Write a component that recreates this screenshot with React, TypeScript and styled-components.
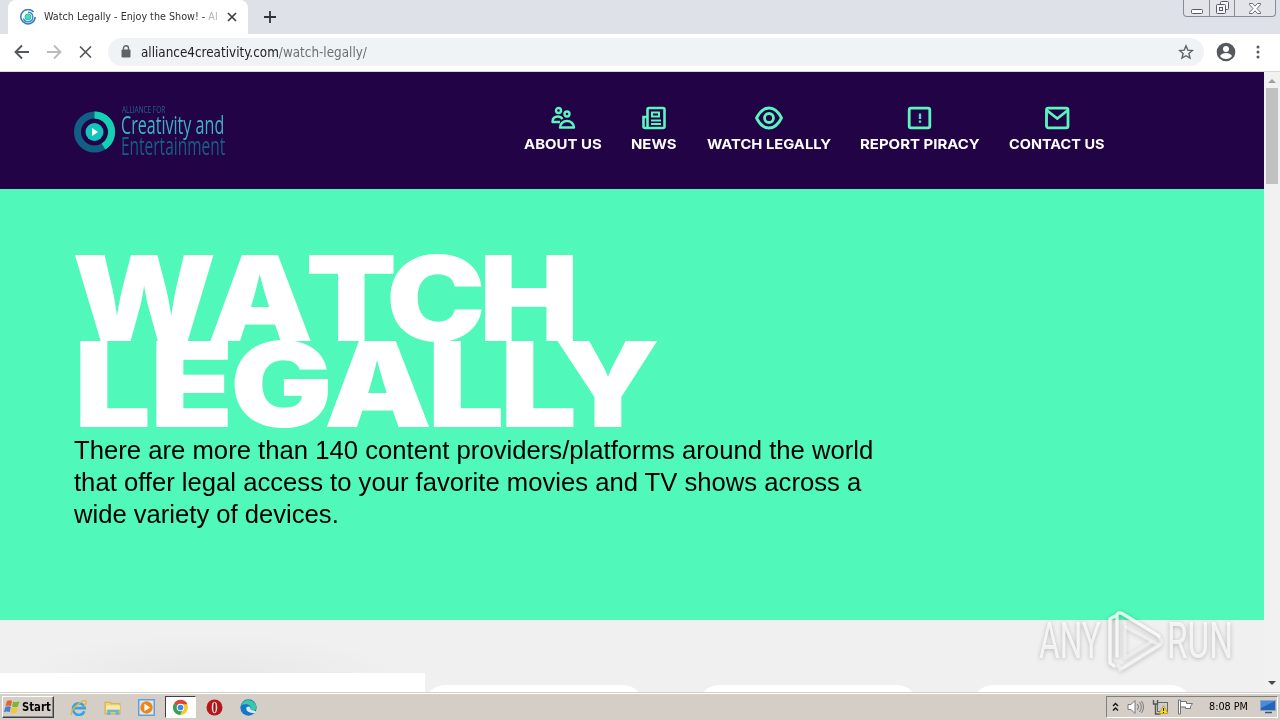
import React, { ReactNode, useLayoutEffect, useRef, useState } from "react";
import styled, { createGlobalStyle } from "styled-components";

const GlobalStyle = createGlobalStyle`
  * {
    box-sizing: border-box;
  }
  body {
    margin: 0;
    overflow: hidden;
    background: #fff;
    font-family: "Liberation Sans", sans-serif;
  }
  svg {
    display: block;
    flex: none;
  }
`;

interface FitProps {
  width: number;
  children: ReactNode;
}

// squeezes or stretches one line of text to a fixed width
const FitText = ({ width, children }: FitProps) => {
  const ref = useRef<HTMLSpanElement>(null);
  const [scale, setScale] = useState(1);
  useLayoutEffect(() => {
    if (ref.current) setScale(width / ref.current.offsetWidth);
  }, [width]);
  return (
    <FitBox $width={width}>
      <FitInner ref={ref} style={{ transform: `scaleX(${scale})` }}>
        {children}
      </FitInner>
    </FitBox>
  );
};

const navItems = [
  { label: "ABOUT US", width: 78, icon: "people" },
  { label: "NEWS", width: 46, icon: "news" },
  { label: "WATCH LEGALLY", width: 124, icon: "eye" },
  { label: "REPORT PIRACY", width: 120, icon: "report" },
  { label: "CONTACT US", width: 96, icon: "mail" },
];

const NavIcon = ({ name }: { name: string }) => (
  <svg width="28" height="24" viewBox="0 0 28 24" fill="none" stroke="#5cf5c0" strokeWidth="2.800">
    {name === "people" && (
      <g strokeWidth="2.400">
        <circle cx="9.500" cy="4.500" r="2.500" />
        <circle cx="18" cy="8" r="2.500" />
        <path d="M11 16H3.500C3.500 12 6 10.500 9 10.500c2 0 3.500 1 4.500 2.500M11 21.500h14c0-4-3.500-6.500-7-6.500S11 17.500 11 21.500z" strokeLinejoin="round" />
      </g>
    )}
    {name === "news" && (
      <g strokeWidth="2.600">
        <path d="M7.500 22V3.500Q7.500 2 9 2h14q1.500 0 1.500 1.500v17Q24.500 22 23 22H5q-1.500 0-1.500-1.500V11h4" />
        <path d="M12 6.500h7v4h-7zM11 14.500h10M11 18h10" strokeWidth="2" />
      </g>
    )}
    {name === "eye" && (
      <>
        <path d="M1.500 12C5 5 9 2 14 2s9 3 12.500 10C23 19 19 22 14 22S5 19 1.500 12z" strokeLinejoin="round" />
        <circle cx="14" cy="12" r="4.500" />
      </>
    )}
    {name === "report" && (
      <>
        <rect x="3.200" y="2.200" width="20.600" height="19.600" rx="1.800" />
        <path d="M14 7.500v5.500M14 14.500v2.200" stroke="#55d9d0" strokeWidth="2.400" />
      </>
    )}
    {name === "mail" && (
      <>
        <rect x="3.500" y="2.200" width="21.500" height="19.600" rx="1.800" />
        <path d="M4 4.500l10.300 8L24.500 4.500" />
      </>
    )}
  </svg>
);

const BrandMark = () => (
  <svg width="42" height="42" viewBox="0 0 42 42">
    <circle cx="20.500" cy="21" r="17" fill="none" stroke="#125f86" strokeWidth="7" />
    <path d="M20.500 4a17 17 0 0 1 9 31.500" fill="none" stroke="#14d0b4" strokeWidth="7" />
    <circle cx="20.500" cy="21" r="9" fill="#12c4bd" />
    <path d="M18 17l6 4-6 4z" fill="#fff" />
  </svg>
);

const Favicon = () => (
  <svg width="16" height="16" viewBox="0 0 16 16" fill="none">
    <path d="M13.500 3A7.200 7.200 0 1 0 15.200 8" stroke="#3576b8" strokeWidth="1.500" />
    <path d="M8 3.200A4.800 4.800 0 1 1 3.400 9.500" stroke="#358fc4" strokeWidth="1.400" />
    <circle cx="8" cy="8" r="3" fill="#48dcbb" stroke="#2ab8bd" />
  </svg>
);

const WatermarkMark = () => (
  <svg width="62" height="66" viewBox="0 0 62 66" fill="none" stroke="#fff" strokeOpacity=".8" strokeWidth="3.400" strokeLinejoin="round" strokeLinecap="round">
    <path d="M11 58L7 55V11l5-3" />
    <path d="M14 48V8Q14 3 20 6l36 22" />
    <path d="M23 19l33 18-35 22q-4 2-6-1" strokeOpacity=".5" />
    <path d="M17 62l39-24q5-4 0-9M22 15v35l26-16" strokeOpacity=".45" />
  </svg>
);

const StartFlag = () => (
  <svg width="17" height="16" viewBox="0 0 17 16">
    <path d="M3 2q3-1.500 5 0L7 7Q4.500 5.800 1.500 7z" fill="#e6622a" />
    <path d="M9 2.500q3 1.300 6.500-.2L14 7.500q-3 1.300-6 0z" fill="#78b837" />
    <path d="M1.300 8q3-1.300 5.500 0l-1 5Q3 12 0 13z" fill="#3f82d6" />
    <path d="M7.800 8.500q3 1.300 6 0l-1.200 5q-3 1.300-6 0z" fill="#f5c62e" />
  </svg>
);

const taskIcons: Record<string, ReactNode> = {
  ie: (
    <>
      <path d="M13.500 11.500A5.500 5.500 0 1 1 13.800 8.600H4" fill="none" stroke="#36a4df" strokeWidth="2.500" />
      <path d="M1.500 15C-.5 11 10 1 14.500 1.500 17 2 14 6 13 7" fill="none" stroke="#e2b63d" strokeWidth="1.300" />
    </>
  ),
  folder: (
    <>
      <path d="M1 3h5l1 1.500h8V14H1z" fill="#f0d477" stroke="#cfb04e" />
      <path d="M2 6h13v4H2z" fill="#f9eaa8" />
      <path d="M3 15v-5h11v5h-3v-2.500H6V15z" fill="#67b7dc" />
    </>
  ),
  media: (
    <>
      <rect x=".7" y=".7" width="14.600" height="14.600" fill="#d8e9f7" stroke="#5c9bd8" strokeWidth="1.300" />
      <circle cx="8" cy="8" r="5.800" fill="#f28412" />
      <path d="M6 4.500L11.500 8 6 11.500z" fill="#fff" />
    </>
  ),
  chrome: (
    <>
      <circle cx="8" cy="8" r="7" fill="#f7c72d" />
      <path d="M8 8L2 4.300A7 7 0 0 1 14.500 5H8z" fill="#e04434" />
      <path d="M8 8L2 4.300A7 7 0 0 0 7.500 15l3-5.500z" fill="#31a352" />
      <circle cx="8" cy="8" r="3.600" fill="#fff" />
      <circle cx="8" cy="8" r="2.700" fill="#4386ec" />
    </>
  ),
  opera: (
    <>
      <circle cx="8" cy="8" r="7.500" fill="#b5161b" />
      <ellipse cx="8" cy="8" rx="2.600" ry="5.500" fill="#f0dcd6" />
      <ellipse cx="8" cy="8" rx="1.100" ry="4.600" fill="#9b1013" />
    </>
  ),
  edge: (
    <>
      <circle cx="8" cy="8" r="7.700" fill="#1378c9" />
      <path d="M.8 6A7.700 7.700 0 0 1 15.700 8.500Q15 11 11.500 10.500 9.500 10 10.300 8.500 10 5.500 6.500 5 3 4.800.8 6z" fill="#3bc8a2" />
      <path d="M6 8q-1 5 7.500 5.500Q17 11 11.500 10.700 9.300 10 10 8.500 8.500 6 6 8z" fill="#dce9ec" />
    </>
  ),
};

const App = () => {
  return (
    <Screen>
      <GlobalStyle />
      <TabStrip>
        <Tab>
          <Favicon />
          <TabTitle>
            <FitText width={174}>
              Watch Legally - Enjoy the Show! - <Faded>Al</Faded>
            </FitText>
          </TabTitle>
          <svg width="10" height="10" viewBox="0 0 10 10" stroke="#3c4043" strokeWidth="1.700">
            <path d="M1 1l8 8M9 1L1 9" />
          </svg>
        </Tab>
        <NewTab>
          <svg width="12" height="12" viewBox="0 0 12 12" stroke="#303338" strokeWidth="1.800">
            <path d="M6 0v12M0 6h12" />
          </svg>
        </NewTab>
        <WindowButtons>
          <WindowButton $width={25}>
            <svg width="12" height="5" viewBox="0 0 12 5">
              <rect x=".5" y=".5" width="11" height="4" rx="1" fill="#fff" stroke="#555b66" />
            </svg>
          </WindowButton>
          <WindowButton $width={25}>
            <svg width="13" height="13" viewBox="0 0 13 13" fill="#f4f5f8" stroke="#555b66">
              <rect x="4.500" y=".5" width="8" height="8" rx="1" />
              <rect x=".5" y="3.500" width="9" height="9" rx="1" />
              <rect x="3.500" y="6.500" width="3" height="3" />
            </svg>
          </WindowButton>
          <WindowButton $width={41}>
            <svg width="12" height="11" viewBox="0 0 12 11">
              <path d="M.5.5h3L6 3.200 8.500.5h3v1.200L8 5.500l3.500 3.800v1.200h-3L6 7.800l-2.500 2.700h-3V9.300L4 5.500.5 1.700z" fill="#fff" stroke="#555b66" strokeWidth=".9" />
            </svg>
          </WindowButton>
        </WindowButtons>
      </TabStrip>
      <Toolbar>
        <svg width="80" height="16" viewBox="0 0 80 16" fill="none" strokeWidth="1.900">
          <path d="M15 8H2M8 1.500L1.500 8 8 14.500" stroke="#54575b" />
          <path d="M33 8h13M40 1.500L46.500 8 40 14.500" stroke="#b9bbbe" />
          <path d="M66 2.500l11 11M77 2.500l-11 11" stroke="#54575b" strokeWidth="1.700" />
        </svg>
        <AddressBar>
          <svg width="10" height="13" viewBox="0 0 10 13">
            <rect x=".5" y="4.500" width="9" height="8" rx="1" fill="#5f6368" />
            <path d="M2.500 5V3.200a2.500 2.500 0 0 1 5 0V5" fill="none" stroke="#5f6368" strokeWidth="1.400" />
          </svg>
          <Url>
            <FitText width={226}>
              alliance4creativity.com<Path>/watch-legally/</Path>
            </FitText>
          </Url>
          <svg width="16" height="16" viewBox="0 0 16 16" fill="none" stroke="#5f6368" strokeWidth="1.400">
            <path d="M8 1.800l1.800 4.300 4.600.4-3.500 3 1.100 4.600L8 11.700l-4 2.400 1.100-4.600-3.500-3 4.600-.4z" />
          </svg>
        </AddressBar>
        <svg width="20" height="20" viewBox="0 0 20 20">
          <circle cx="10" cy="10" r="9.300" fill="#55585d" />
          <circle cx="10" cy="7" r="3" fill="#fff" />
          <path d="M4 14q2-3 6-3t6 3q-2 3-6 3t-6-3z" fill="#fff" />
        </svg>
        <svg width="4" height="14" viewBox="0 0 4 14" fill="#55585d">
          <circle cx="2" cy="2" r="1.500" />
          <circle cx="2" cy="7" r="1.500" />
          <circle cx="2" cy="12" r="1.500" />
        </svg>
      </Toolbar>
      <Viewport>
        <Page>
          <Header>
            <Brand>
              <BrandMark />
              <BrandText>
                <BrandSmall>
                  <FitText width={43}>ALLIANCE FOR</FitText>
                </BrandSmall>
                <BrandLine $color="#3cb3c4">
                  <FitText width={103}>Creativity and</FitText>
                </BrandLine>
                <BrandLine $color="#175f85">
                  <FitText width={104}>Entertainment</FitText>
                </BrandLine>
              </BrandText>
            </Brand>
            <Nav>
              {navItems.map((item) => (
                <NavItem key={item.label}>
                  <NavIcon name={item.icon} />
                  <FitText width={item.width}>{item.label}</FitText>
                </NavItem>
              ))}
            </Nav>
          </Header>
          <Hero>
            <Title>
              <TitleLine $shift={-2}>
                <FitText width={502}>
                  <Kern $by={-8}>W</Kern>
                  <Kern $by={-7}>A</Kern>
                  <Kern $by={-6}>T</Kern>
                  <Kern $by={-6}>C</Kern>H
                </FitText>
              </TitleLine>
              <TitleLine $shift={0}>
                <FitText width={582}>
                  <Kern $by={-1}>L</Kern>
                  <Kern $by={-3}>E</Kern>
                  <Kern $by={-8}>G</Kern>ALLY
                </FitText>
              </TitleLine>
            </Title>
            <Lead>
              <FitText width={799}>There are more than 140 content providers/platforms around the world</FitText>
              <FitText width={787}>that offer legal access to your favorite movies and TV shows across a</FitText>
              <FitText width={265}>wide variety of devices.</FitText>
            </Lead>
          </Hero>
          <Below>
            <Panel />
            <Cards>
              <Card />
              <Card />
              <Card />
            </Cards>
          </Below>
        </Page>
        <Scrollbar>
          <Arrow $up />
          <Thumb />
          <Arrow />
        </Scrollbar>
      </Viewport>
      <Taskbar>
        <StartButton>
          <StartFlag />
          <FitText width={29}>Start</FitText>
        </StartButton>
        <TaskList>
          {Object.keys(taskIcons).map((name) => (
            <TaskButton key={name} $active={name === "chrome"}>
              <svg width="17" height="17" viewBox="0 0 16 16">
                {taskIcons[name]}
              </svg>
            </TaskButton>
          ))}
        </TaskList>
        <Tray>
          <svg width="7" height="10" viewBox="0 0 7 10" fill="none" stroke="#111" strokeWidth="1.400">
            <path d="M1 4l2.500-2.500L6 4M1 8.500L3.500 6 6 8.500" />
          </svg>
          <svg width="17" height="16" viewBox="0 0 17 16" fill="none" stroke="#77797c">
            <path d="M1 5.500h3l4-4v13l-4-4H1z" fill="#fff" />
            <path d="M10.500 5q2 3 0 6M12.500 3q3.500 5 0 10M14.500 2q4 6 0 12" />
          </svg>
          <svg width="17" height="16" viewBox="0 0 17 16">
            <rect x="5.500" y="3.500" width="10" height="9" fill="#c9ced2" stroke="#66696c" />
            <path d="M1.500 1v4h4V1M3.500 5v10h5" fill="none" stroke="#555" strokeWidth="1.400" />
            <path d="M11.500 6.500l4.500 8H7z" fill="#f9d52f" stroke="#c8a414" />
            <path d="M11.500 9v3M11.500 13v1" stroke="#222" />
          </svg>
          <svg width="17" height="16" viewBox="0 0 17 16" fill="#fff" stroke="#707376">
            <path d="M1.500 1h2v14h-2zM3.500 2.500h6V4.500h6l-2 3 0 2h-5V8h-5z" />
          </svg>
          <Clock>
            <FitText width={39}>8:08 PM</FitText>
          </Clock>
          <svg width="16" height="14" viewBox="0 0 16 14">
            <rect x=".5" y=".5" width="15" height="10" fill="#2764b8" stroke="#88a9cc" />
            <path d="M1 1h14L1 8z" fill="#4b8cda" />
            <path d="M5 12.500h7" stroke="#345782" strokeWidth="1.500" />
          </svg>
        </Tray>
      </Taskbar>
      <Watermark>
        <FitText width={62}>ANY</FitText>
        <WatermarkMark />
        <FitText width={66}>RUN</FitText>
      </Watermark>
    </Screen>
  );
};

export default App;

const Screen = styled.div`
  position: relative;
  display: flex;
  flex-direction: column;
  width: 1280px;
  height: 720px;
  overflow: hidden;
`;

const FitBox = styled.span<{ $width: number }>`
  display: block;
  flex: none;
  width: ${(p) => p.$width}px;
  white-space: nowrap;
`;

const FitInner = styled.span`
  display: inline-block;
  transform-origin: 0 50%;
  vertical-align: top;
`;

// browser window
const TabStrip = styled.div`
  display: flex;
  flex: none;
  height: 34px;
  padding-left: 8px;
  background: #dee1e8;
`;

const Tab = styled.div`
  display: flex;
  align-items: center;
  width: 240px;
  padding: 0 11px 0 12px;
  border-radius: 8px 8px 0 0;
  background: #fff;
`;

const TabTitle = styled.div`
  flex: 1;
  margin: 0 9px 0 8px;
  overflow: hidden;
  color: #303236;
  font: 11px/16px "DejaVu Sans Condensed", "DejaVu Sans", sans-serif;
`;

const Faded = styled.span`
  color: #b5b5b5;
`;

const NewTab = styled.div`
  display: flex;
  align-items: center;
  margin-left: 16px;
`;

const WindowButtons = styled.div`
  display: flex;
  height: 17px;
  margin: 0 4px 0 auto;
  border: 1px solid #878b96;
  border-top: none;
  border-radius: 0 0 4px 4px;
  background: #e2e4ea;
`;

const WindowButton = styled.div<{ $width: number }>`
  display: flex;
  align-items: flex-end;
  justify-content: center;
  width: ${(p) => p.$width}px;
  padding-bottom: 2px;
  & + & {
    border-left: 1px solid #878b96;
  }
`;

const Toolbar = styled.div`
  display: flex;
  align-items: center;
  flex: none;
  height: 38px;
  padding: 0 20px 2px 14px;
  border-bottom: 1px solid #d9d6e2;
  background: #fff;
  & > svg:last-child {
    margin-left: 20px;
  }
`;

const AddressBar = styled.div`
  display: flex;
  align-items: center;
  flex: 1;
  height: 28px;
  margin: 0 12px 0 14px;
  padding: 0 10px 0 13px;
  border-radius: 14px;
  background: #f0f3f6;
`;

const Url = styled.div`
  flex: 1;
  margin-left: 10px;
  color: #202124;
  font: 14px/18px "DejaVu Sans Condensed", "DejaVu Sans", sans-serif;
`;

const Path = styled.span`
  color: #6c7074;
`;

const Viewport = styled.div`
  display: flex;
  flex: 1;
  min-height: 0;
`;

const Page = styled.div`
  display: flex;
  flex-direction: column;
  width: 1264px;
  overflow: hidden;
  background: #f0f0f0;
`;

const Header = styled.header`
  display: flex;
  flex: none;
  height: 117px;
  padding: 34px 0 0 74px;
  background: #220345;
`;

const Brand = styled.div`
  display: flex;
  width: 150px;
  & > svg {
    margin: 5px 5px 0 0;
  }
`;

const BrandText = styled.div`
  font-family: "Open Sans", sans-serif;
`;

const BrandSmall = styled.div`
  height: 8px;
  margin-left: 1px;
  color: #1d668e;
  font-size: 9px;
  line-height: 8px;
`;

const BrandLine = styled.div<{ $color: string }>`
  height: 21px;
  color: ${(p) => p.$color};
  font-size: 25px;
  font-weight: 400;
  line-height: 21px;
`;

const Nav = styled.nav`
  display: flex;
  gap: 29.3px;
  margin-left: 300px;
`;

const NavItem = styled.div`
  display: flex;
  flex-direction: column;
  align-items: center;
  gap: 6px;
  color: #fff;
  font: 700 13.6px/16px Inter, sans-serif;
`;

const Hero = styled.section`
  flex: none;
  height: 431px;
  padding: 66px 0 0 74px;
  background: #50f9b9;
`;

const Title = styled.h1`
  margin: 0;
  color: #fff;
  font: 900 118.3px/86px Inter, sans-serif;
  letter-spacing: -4px;
`;

const TitleLine = styled.span<{ $shift: number }>`
  display: block;
  height: 86px;
  margin-left: ${(p) => p.$shift}px;
`;

const Kern = styled.span<{ $by: number }>`
  letter-spacing: ${(p) => p.$by}px;
`;

const Lead = styled.div`
  margin-top: 7px;
  color: #000;
  font-size: 26px;
  line-height: 32px;
`;

const Below = styled.section`
  display: flex;
  align-items: flex-end;
  flex: 1;
  background: radial-gradient(190px 42px at 210px 56px, #e7e7e7, #f0f0f0);
`;

const Panel = styled.div`
  width: 425px;
  height: 19px;
  background: #fff;
`;

const Cards = styled.div`
  display: flex;
  gap: 56px;
  height: 7px;
  overflow: hidden;
`;

const Card = styled.div`
  width: 218px;
  height: 60px;
  border-radius: 20px;
  background: #fff;
`;

const Scrollbar = styled.div`
  display: flex;
  flex-direction: column;
  align-items: center;
  width: 16px;
  background: #f1f1f1;
`;

const Arrow = styled.div<{ $up?: boolean }>`
  width: 0;
  margin: ${(p) => (p.$up ? "7px 0 5px" : "auto 0 7px")};
  border: 4px solid transparent;
  border-top: ${(p) => (p.$up ? "0" : "4px solid #484848")};
  border-bottom: ${(p) => (p.$up ? "4px solid #a0a0a0" : "0")};
`;

const Thumb = styled.div`
  width: 12px;
  height: 96px;
  background: #c1c1c1;
`;

// desktop taskbar
const Taskbar = styled.footer`
  display: flex;
  align-items: center;
  flex: none;
  height: 28px;
  padding: 2px 2px 1px;
  border-top: 1px solid #d4d0c8;
  background: #d5cec6;
  box-shadow: inset 0 1px #fff;
`;

const StartButton = styled.div`
  display: flex;
  align-items: center;
  gap: 1px;
  width: 52px;
  height: 22px;
  padding-left: 1px;
  border: 1px solid #fff;
  border-right-color: #404040;
  border-bottom-color: #404040;
  box-shadow: inset -1px -1px #888;
  font: 700 12px/16px "DejaVu Sans Condensed", "DejaVu Sans", sans-serif;
`;

const TaskList = styled.div`
  display: flex;
  gap: 3px;
  margin-left: 9px;
`;

const TaskButton = styled.div<{ $active: boolean }>`
  display: flex;
  align-items: center;
  justify-content: center;
  width: 31px;
  height: 22px;
  border: 1px solid transparent;
  border-color: ${(p) => (p.$active ? "#404040 #fff #fff #404040" : "transparent")};
  background: ${(p) => (p.$active ? "#fff" : "none")};
`;

const Tray = styled.div`
  display: flex;
  align-items: center;
  gap: 8px;
  width: 172px;
  height: 22px;
  margin-left: auto;
  padding-left: 5px;
  border: 1px solid #808080;
  border-right-color: #fff;
  border-bottom-color: #fff;
`;

const Clock = styled.div`
  margin: 0 4px 0 7px;
  font: 11px/16px "DejaVu Sans Condensed", "DejaVu Sans", sans-serif;
`;

const Watermark = styled.div`
  position: absolute;
  top: 608px;
  left: 1039px;
  display: flex;
  align-items: center;
  gap: 2px;
  color: rgba(255, 255, 255, 0.75);
  font: 400 50px/66px Roboto, sans-serif;
  filter: drop-shadow(0 1px 2px rgba(0, 0, 0, 0.32));
`;
